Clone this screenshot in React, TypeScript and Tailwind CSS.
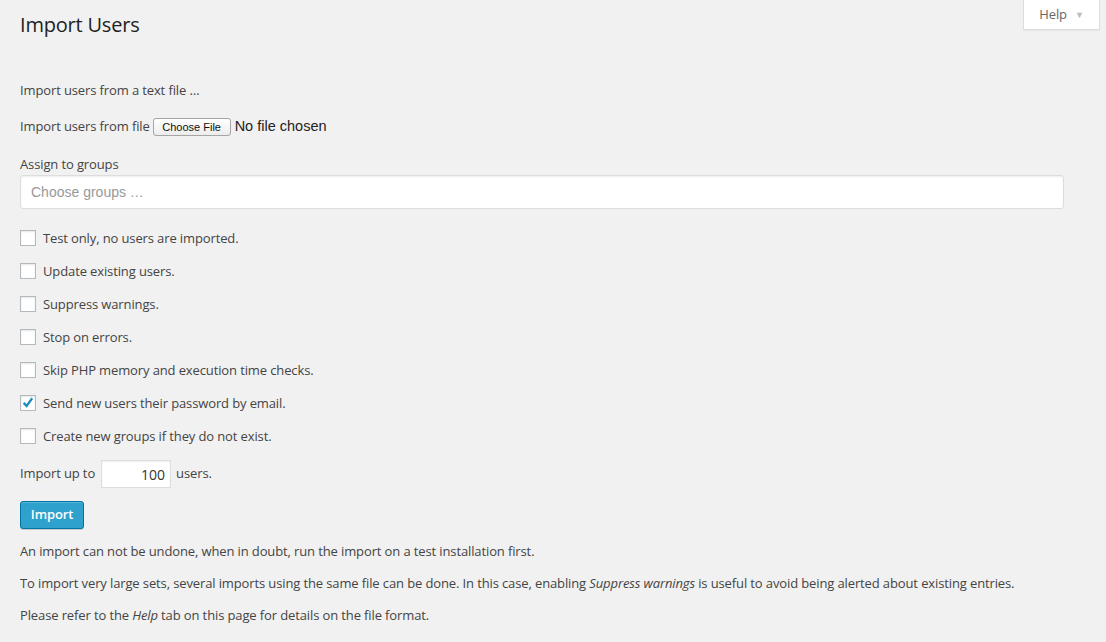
import React from "react";

const Box = ({ checked }: { checked?: boolean }) => (
  <span className="relative inline-flex h-[16px] w-[16px] shrink-0 items-center justify-center border border-[#b4b9be] bg-white shadow-[inset_0_1px_2px_rgba(0,0,0,0.1)]">
    {checked && (
      <svg viewBox="0 0 16 16" className="absolute left-[-1px] top-[-1px] h-[16px] w-[16px]">
        <path d="M3.6 7.9l3 3 5.6-7.6" fill="none" stroke="#1e8cbe" strokeWidth="2.3" strokeLinejoin="miter" />
      </svg>
    )}
  </span>
);

const rows: [string, boolean][] = [
  ["Test only, no users are imported.", false],
  ["Update existing users.", false],
  ["Suppress warnings.", false],
  ["Stop on errors.", false],
  ["Skip PHP memory and execution time checks.", false],
  ["Send new users their password by email.", true],
  ["Create new groups if they do not exist.", false],
];

export default function App() {
  return (
    <div className="relative min-h-[642px] w-full bg-[#f1f1f1] font-['Open_Sans',sans-serif] text-[13px] tracking-[-0.12px] text-[#444]">
      <div className="absolute right-[6px] top-0 flex h-[30px] w-[77px] items-center justify-center gap-[8px] border border-t-0 border-[#ddd] bg-white text-[13px] text-[#666] shadow-[0_1px_1px_rgba(0,0,0,0.04)]">
        <span>Help</span>
        <span className="text-[9px] text-[#bbb]">▼</span>
      </div>
      <div className="pl-[20px] pr-[42px] pt-[10px]">
        <h2 className="h-[29px] text-[20px] leading-[29px] tracking-[-0.2px] text-[#222]">Import Users</h2>
        <p className="mt-[42px] leading-[18px]">Import users from a text file …</p>
        <div className="mt-[19px] flex h-[18px] items-center">
          <span>Import users from file</span>
          <span className="ml-[3px] inline-flex h-[18px] w-[78px] items-center justify-center rounded-[3px] border border-[#a5a5a5] bg-[linear-gradient(#fff,#ececec)] font-['Liberation_Sans',sans-serif] text-[11px] tracking-normal text-[#111]">
            Choose File
          </span>
          <span className="ml-[4px] font-['Liberation_Sans',sans-serif] text-[14.5px] tracking-normal text-[#222]">No file chosen</span>
        </div>
        <p className="mt-[19px] leading-[18px]">Assign to groups</p>
        <div className="mt-[2px] flex h-[34px] items-center rounded-[3px] border border-[#ddd] bg-white pl-[10px] font-['Liberation_Sans',sans-serif] text-[14px] tracking-normal text-[#999] shadow-[inset_0_1px_2px_rgba(0,0,0,0.07)]">
          Choose groups …
        </div>
        <div className="mt-[21px] flex flex-col gap-[17px]">
          {rows.map(([t, c]) => (
            <label key={t} className="flex h-[16px] items-center gap-[7px]">
              <Box checked={c} />
              <span className="leading-[16px]">{t}</span>
            </label>
          ))}
        </div>
        <div className="mt-[16px] flex h-[28px] items-center">
          <span>Import up to</span>
          <span className="ml-[6px] flex h-[28px] w-[70px] items-center justify-end border border-[#ddd] bg-white pr-[5px] text-[14px] tracking-normal text-[#333] shadow-[inset_0_1px_2px_rgba(0,0,0,0.07)]">
            100
          </span>
          <span className="ml-[5px]">users.</span>
        </div>
        <button className="mt-[13px] flex h-[28px] w-[64px] items-center justify-center rounded-[3px] border border-[#0074a2] bg-[#2ea2cc] pb-[1px] text-[13px] font-semibold text-white shadow-[inset_0_1px_0_rgba(120,200,230,0.5),0_1px_0_rgba(0,0,0,0.15)]">
          Import
        </button>
        <p className="mt-[13px] leading-[18px]">An import can not be undone, when in doubt, run the import on a test installation first.</p>
        <p className="mt-[14px] leading-[18px]">
          To import very large sets, several imports using the same file can be done. In this case, enabling <em>Suppress warnings</em> is useful to avoid being alerted about existing entries.
        </p>
        <p className="mt-[14px] leading-[18px]">
          Please refer to the <em>Help</em> tab on this page for details on the file format.
        </p>
      </div>
    </div>
  );
}
